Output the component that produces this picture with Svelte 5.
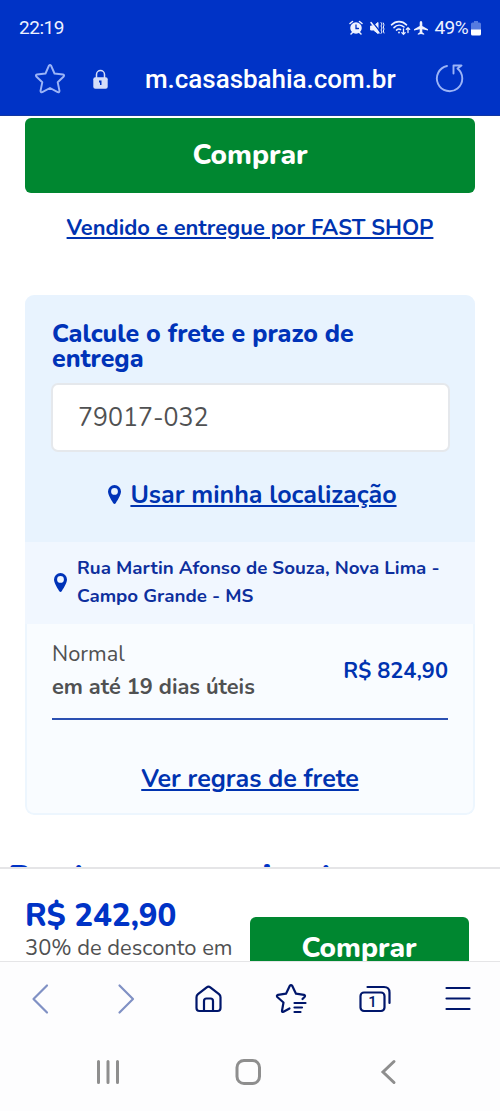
<script>
  let cep = '79017-032';
  let address = 'Rua Martin Afonso de Souza, Nova Lima - Campo Grande - MS';
  let shipping = { name: 'Normal', deadline: 'em até 19 dias úteis', price: 'R$ 824,90' };
  let tabs = 1;
</script>

<div class="screen">
  <header>
    <div class="status">
      <span class="time">22:19</span>
      <svg class="status-icons" width="82" height="20" viewBox="0 0 82 20" fill="none" stroke="#eef2ff" stroke-width="1.5" stroke-linecap="round">
        <circle cx="7" cy="10" r="5" fill="#eef2ff" />
        <path d="M1 5.500 3.500 3.500M10.500 3.500 13 5.500M3.500 14.500 2 16M10.500 14.500 12 16" />
        <path d="M7 7V10.500H9.500" stroke="#0033c6" stroke-width="1.300" />
        <path d="M22 8H24.500L29 4.500V15.500L24.500 12H22Z" fill="#eef2ff" stroke-width="1" />
        <path d="M23.500 4 30.500 13" stroke="#0033c6" stroke-width="1.300" />
        <path d="M22 4.500 30 15" stroke-width="1.500" />
        <path d="M32 4.500 33 6 32 8 33 10 32 12 33 14 32 15.500M34.300 5 35 7 34.300 9 35 11 34.300 13 35 15" stroke-width="1" />
        <path d="M42.500 6.800C47 2.500 53 2.500 57.500 6.800M45 9.600C48 6.500 52 6.500 55 9M47.500 12.100C49 10.800 50.500 10.800 51.500 11.500" stroke-width="1.600" />
        <circle cx="50" cy="14.500" r=".9" fill="#eef2ff" stroke="none" />
        <path d="M54.500 11V16.300M52.800 14.600 54.500 16.300 56.200 14.600M59 14.500V9.700M57.300 11.400 59 9.700 60.700 11.400" stroke-width="1.300" />
        <path d="M72 3C71 3 70.700 4.200 70.700 5.300V8L65 11.200V12.600L70.700 11.200V14.300L68.800 15.700V16.800L72 16L75.200 16.800V15.700L73.300 14.300V11.200L79 12.600V11.200L73.300 8V5.300C73.300 4.200 73 3 72 3Z" fill="#eef2ff" stroke="none" />
      </svg>
      <span class="percent">49%</span>
      <svg class="battery" width="10" height="15" viewBox="0 0 10 15">
        <path d="M3 0H7V1.500H8.500Q10 1.500 10 3V9H0V3Q0 1.500 1.500 1.500H3Z" fill="#567be0" />
        <path d="M0 8.500H10V13Q10 14.500 8.500 14.500H1.500Q0 14.500 0 13Z" fill="#fff" />
      </svg>
    </div>
    <div class="address-bar">
      <svg class="star" width="32" height="32" viewBox="0 0 32 32" fill="none" stroke="#9bb4f7" stroke-width="1.900" stroke-linejoin="round">
        <path d="M15 2.500Q16 1.200 17 2.500L20.500 10.500 29 11.500Q30.800 12 29.700 13.500L23.700 19.300 25.500 28Q25.400 29.600 23.700 29.200L16 25 8.300 29.200Q6.600 29.600 6.500 28L8.300 19.300 2.300 13.500Q1.200 12 3 11.500L11.500 10.500Z" />
      </svg>
      <svg class="lock" width="15" height="20" viewBox="0 0 15 20">
        <path d="M3.500 9V5.500A4 4 0 0 1 11.500 5.500V9" fill="none" stroke="#d5def9" stroke-width="1.500" />
        <rect x=".3" y="8.300" width="14.400" height="11.500" rx="2" fill="#d5def9" />
        <path d="M6 11.500H8.500V16H7V13.500H6Z" fill="#0033c6" />
      </svg>
      <span class="url">m.casasbahia.com.br</span>
      <svg class="reload" width="30" height="30" viewBox="0 0 30 30" fill="none" stroke="#9bb4f7" stroke-width="1.900" stroke-linecap="round" stroke-linejoin="round">
        <path d="M12 3A12.700 12.700 0 1 0 22.500 5.500L26.500 2.500H18.500V10.500" />
      </svg>
    </div>
  </header>

  <main>
    <button class="buy">Comprar</button>
    <a class="seller" href="#seller"><span>Vendido e entregue por FAST SHOP</span></a>

    <section class="freight">
      <div class="calc">
        <h2>Calcule o frete e prazo de entrega</h2>
        <input bind:value={cep} aria-label="CEP" />
        <a class="locate" href="#locate">
          <svg width="13" height="19" viewBox="0 0 13 19"><path fill="#0033b8" fill-rule="evenodd" d="M6.500 0A6.500 6.500 0 0 0 0 6.500C0 10 4.500 17 5.300 18.200Q6.500 19.600 7.700 18.200C8.500 17 13 10 13 6.500A6.500 6.500 0 0 0 6.500 0ZM6.500 3A3.400 3.400 0 1 1 6.500 9.800A3.400 3.400 0 1 1 6.500 3Z" /></svg>
          <span>Usar minha localização</span>
        </a>
      </div>
      <div class="place">
        <svg width="13" height="19" viewBox="0 0 13 19"><path fill="#0033b8" fill-rule="evenodd" d="M6.500 0A6.500 6.500 0 0 0 0 6.500C0 10 4.500 17 5.300 18.200Q6.500 19.600 7.700 18.200C8.500 17 13 10 13 6.500A6.500 6.500 0 0 0 6.500 0ZM6.500 3A3.400 3.400 0 1 1 6.500 9.800A3.400 3.400 0 1 1 6.500 3Z" /></svg>
        <p>{address}</p>
      </div>
      <div class="result">
        <div class="option">
          <div>
            <p class="name">{shipping.name}</p>
            <p class="deadline">{shipping.deadline}</p>
          </div>
          <span class="price">{shipping.price}</span>
        </div>
        <a class="rules" href="#rules"><span>Ver regras de frete</span></a>
      </div>
    </section>

    <h2 class="sponsored">Produtos patrocinados</h2>
  </main>

  <div class="sticky">
    <div class="offer">
      <strong>R$ 242,90</strong>
      <p>30% de desconto em</p>
      <p class="terms">1x no cartão</p>
    </div>
    <button class="buy small">Comprar</button>
  </div>

  <nav class="browser">
    <svg viewBox="0 0 32 32"><path class="dim" d="M22 2.500 8.500 16 22 29.500" /></svg>
    <svg viewBox="0 0 32 32"><path class="dim" d="M11.500 2.500 25 16 11.500 29.500" /></svg>
    <svg viewBox="0 0 32 32">
      <path d="M14.700 4.300Q16.500 3 18.300 4.300L27 11.200Q28.500 12.500 28.500 14.200V25Q28.500 28 25.500 28H7.500Q4.500 28 4.500 25V14.200Q4.500 12.500 6 11.200ZM12 28V18Q12 15.500 14.500 15.500H18.500Q21 15.500 21 18V28" />
    </svg>
    <svg viewBox="0 0 32 32">
      <path d="M14.500 25.500 8.500 28.800Q6.700 29.500 7 27.800L8.500 19.500 2.300 14Q1.200 12.500 3 11.800L11 10.700 14.700 3Q16 1.200 17.300 3L21 10.700 29 11.800Q30.800 12.500 29.500 14L27.500 16M19.500 20H30.500M19.500 24.500H27M19.500 29H25.500" />
    </svg>
    <svg viewBox="0 0 32 32">
      <rect x="1.500" y="9.500" width="24" height="18.500" rx="3.500" />
      <path d="M8.500 4H25Q30.500 4 30.500 9.500V20" />
      <text x="13.500" y="24.200" text-anchor="middle">{tabs}</text>
    </svg>
    <svg viewBox="0 0 32 32"><path d="M4.500 5H27.500M4.500 15.500H27.500M4.500 26H27.500" /></svg>
  </nav>

  <div class="system">
    <svg viewBox="0 0 26 26"><path d="M4.500 2.500V23.500M14 2.500V23.500M23.500 2.500V23.500" /></svg>
    <svg viewBox="0 0 26 26"><rect x="2" y="1.500" width="22.500" height="23" rx="7" /></svg>
    <svg viewBox="0 0 26 26"><path d="M19 2.500 8 13 19 23.500" /></svg>
  </div>
</div>

<style>
  :global(body) { background: #fff; }
  .screen { width: 500px; height: 1111px; overflow: hidden; display: flex; flex-direction: column; background: #fdfdfe; font-family: Nunito, Lato, sans-serif; color: #505152; }
  .screen * { box-sizing: border-box; }
  p, h2 { margin: 0; }
  a { color: #0033b0; }
  a span { white-space: nowrap; }

  header { height: 116px; flex: none; background: #0033c6; border-bottom: 1px solid #1237a2; font-family: Roboto, sans-serif; color: #fff; }
  .status { height: 56px; display: flex; align-items: center; padding: 0 19px; color: #eef2ff; }
  .time { font-size: 19px; letter-spacing: -.45px; margin: -1px auto 0 0; }
  .status-icons { margin-right: 4px; }
  .percent { font-size: 19px; letter-spacing: -.6px; margin: -1px 3px 0 0; }
  .battery { margin-top: 1px; }
  .address-bar { display: flex; align-items: center; height: 46px; padding-left: 34px; }
  .lock { margin-left: 27px; }
  .url { width: 251px; margin: -1px 0 0 37px; font-size: 26px; font-weight: 500; letter-spacing: -.03px; white-space: nowrap; }
  .reload { margin-left: 39px; margin-top: -2px; }

  main { height: 751px; flex: none; overflow: hidden; padding: 2px 25px 0; background: #fff; }
  .buy { display: flex; align-items: center; justify-content: center; width: 100%; height: 75px; padding: 0 0 1px; border: 0; border-radius: 6px; background: #008730; color: #fff; font: 800 28px Nunito, Lato, sans-serif; }
  .seller { display: flex; justify-content: center; height: 102px; padding-top: 21px; font-size: 21.900px; line-height: 28px; font-weight: 700; text-underline-offset: 2px; }

  .freight { height: 520px; border-radius: 9px; overflow: hidden; background: #f9fcff; }
  .calc { height: 247px; padding: 27px 25px 0 26px; background: #e8f3fe; }
  .calc h2 { width: 330px; padding-left: 1px; color: #0033b8; font-size: 24.950px; line-height: 25px; font-weight: 800; }
  input { display: block; width: 399px; height: 69px; margin-top: 11px; padding: 0 25px; border: 2px solid #e5e8ec; border-radius: 7px; background: #fff; color: #505152; font: 400 25px Nunito, Lato, sans-serif; }
  .locate { display: flex; align-items: center; justify-content: center; gap: 9px; margin-top: 26px; padding-left: 4px; height: 34px; font-size: 25px; line-height: 34px; font-weight: 700; text-underline-offset: 2px; }
  .locate svg { margin-top: -1px; }
  .place { display: flex; align-items: center; gap: 10px; height: 82px; padding: 0 25px 2px 29px; background: #f1f7ff; color: #0d2f9d; font-size: 18.750px; line-height: 28px; font-weight: 700; }
  .place svg { flex: none; }
  .result { height: 191px; padding: 0 25px; border: 2px solid #edf6fe; border-top: 0; border-radius: 0 0 9px 9px; }
  .option { display: flex; align-items: center; justify-content: space-between; height: 96px; border-bottom: 2px solid #2b50b2; font-size: 21.800px; line-height: 33px; }
  .deadline { font-weight: 700; }
  .price { font-weight: 700; color: #0033b0; }
  .rules { display: flex; justify-content: center; margin-top: 42px; font-size: 25px; line-height: 34px; font-weight: 700; text-underline-offset: 2px; }
  .sponsored { margin: 42px 0 0 -17px; color: #0033c6; font-size: 33.300px; line-height: 42px; font-weight: 800; white-space: nowrap; }

  .sticky { display: flex; height: 95px; flex: none; overflow: hidden; padding-left: 25px; border-top: 2px solid #e5e5e7; border-bottom: 1px solid #e5e5e7; background: #fff; }
  .offer { width: 225px; padding-top: 26px; }
  .offer strong { display: block; color: #0033c6; font-size: 31.300px; line-height: 41px; font-weight: 800; white-space: nowrap; }
  .offer p { font-size: 21.900px; line-height: 22px; padding-top: 1px; white-space: nowrap; }
  .offer .terms { padding: 0 0 0 5px; }
  .small { width: 219px; height: 61px; margin-top: 48px; padding: 0 1px 0 0; flex: none; }

  .browser { display: flex; align-items: center; justify-content: space-between; height: 73px; flex: none; padding: 0 26px 0 25px; }
  .browser svg { width: 32px; height: 32px; fill: none; stroke: #00166b; stroke-width: 2.200; stroke-linecap: round; stroke-linejoin: round; }
  .browser .dim { stroke: #8091c4; }
  .browser text { fill: #00166b; stroke: none; font: 500 15px Roboto, sans-serif; }
  .system { display: flex; justify-content: space-between; height: 76px; padding: 24px 99px 0 94px; }
  .system svg { width: 26px; height: 26px; fill: none; stroke: #8e8e8e; stroke-width: 3; stroke-linecap: round; }
</style>
